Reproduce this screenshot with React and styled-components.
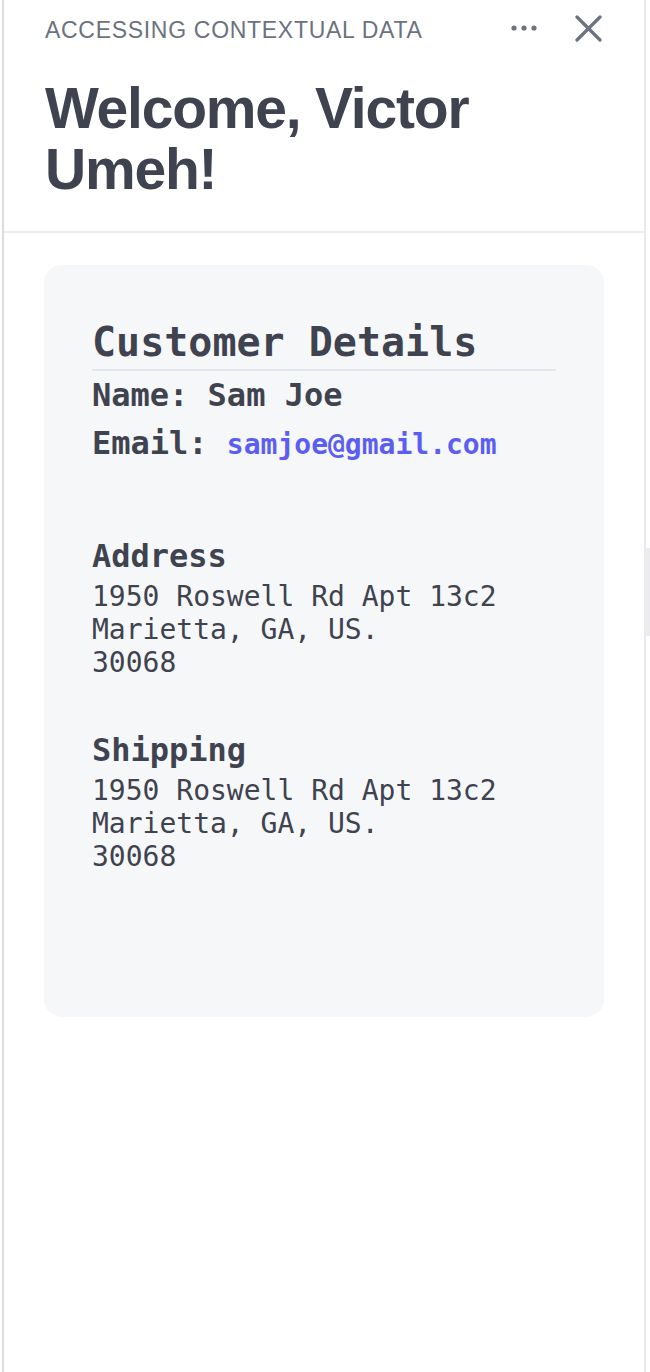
import React from 'react';
import styled, { createGlobalStyle } from 'styled-components';

const GlobalStyle = createGlobalStyle`
  html, body {
    margin: 0;
    padding: 0;
    background: #ffffff;
  }
  * {
    box-sizing: border-box;
  }
`;

const Panel = styled.div`
  margin-left: 2px;
  width: 644px;
  min-height: 100vh;
  border-left: 2px solid #dcdcdc;
  border-right: 2px solid #e9e9ee;
  background: #ffffff;
`;

const Header = styled.header`
  padding: 16px 42px 31px 41px;
  border-bottom: 2px solid #ececf2;
`;

const TopBar = styled.div`
  display: flex;
  align-items: center;
  justify-content: space-between;
  height: 28px;
`;

const Label = styled.span`
  font-family: 'Liberation Sans', Arial, sans-serif;
  font-size: 23px;
  line-height: 28px;
  letter-spacing: 0.7px;
  color: #6b7280;
  text-transform: uppercase;
`;

const Actions = styled.div`
  display: flex;
  align-items: center;
  gap: 38px;
  margin-top: -4px;
`;

const IconButton = styled.button`
  display: flex;
  align-items: center;
  justify-content: center;
  padding: 0;
  border: none;
  background: none;
  color: #6b7280;
  cursor: pointer;
`;

const Title = styled.h1`
  margin: 34px 0 0;
  font-family: 'Liberation Sans', Arial, sans-serif;
  font-size: 57px;
  font-weight: 700;
  line-height: 61px;
  letter-spacing: -1.2px;
  color: #3f434f;
`;

const Main = styled.main`
  padding: 32px 40px;
`;

const Card = styled.section`
  background: #f6f7f9;
  border-radius: 18px;
  padding: 54px 48px 144px 48px;
  font-family: 'DejaVu Sans Mono', 'Liberation Mono', monospace;
  color: #3f434f;
`;

const CardTitle = styled.h2`
  margin: 0;
  padding-bottom: 4px;
  font-size: 40px;
  font-weight: 700;
  line-height: normal;
  border-bottom: 2px solid #e2e7ed;
`;

const Field = styled.p`
  margin: 0;
  font-size: 32px;
  font-weight: 700;
  line-height: 48px;
  white-space: nowrap;
`;

const Mail = styled.a`
  font-size: 28px;
  color: #5b5ef2;
  text-decoration: none;
`;

const Block = styled.div`
  margin-top: ${(p) => p.$gap}px;
`;

const BlockTitle = styled.h3`
  margin: 0 0 5px;
  font-size: 32px;
  font-weight: 700;
  line-height: normal;
`;

const Lines = styled.div`
  font-size: 28px;
  line-height: normal;
  white-space: pre;
`;

const Handle = styled.div`
  position: fixed;
  right: 0;
  top: 548px;
  width: 5px;
  height: 88px;
  background: #ebebf0;
`;

const DotsIcon = () => (
  <svg width="26" height="6" viewBox="0 0 26 6" fill="currentColor">
    <circle cx="3" cy="3" r="2.6" />
    <circle cx="13" cy="3" r="2.6" />
    <circle cx="23" cy="3" r="2.6" />
  </svg>
);

const CloseIcon = () => (
  <svg width="27" height="27" viewBox="0 0 27 27" fill="none" stroke="currentColor" strokeWidth="3.2" strokeLinecap="round">
    <path d="M2 2 L25 25" />
    <path d="M25 2 L2 25" />
  </svg>
);

const address = `1950 Roswell Rd Apt 13c2
Marietta, GA, US.
30068`;

const App = () => {
  return (
    <>
      <GlobalStyle />
      <Panel>
        <Header>
          <TopBar>
            <Label>Accessing contextual data</Label>
            <Actions>
              <IconButton aria-label="More">
                <DotsIcon />
              </IconButton>
              <IconButton aria-label="Close">
                <CloseIcon />
              </IconButton>
            </Actions>
          </TopBar>
          <Title>
            Welcome, Victor
            <br />
            Umeh!
          </Title>
        </Header>
        <Main>
          <Card>
            <CardTitle>Customer Details</CardTitle>
            <Field>Name: Sam Joe</Field>
            <Field>
              Email: <Mail href="mailto:samjoe@gmail.com">samjoe@gmail.com</Mail>
            </Field>
            <Block $gap={68}>
              <BlockTitle>Address</BlockTitle>
              <Lines>{address}</Lines>
            </Block>
            <Block $gap={52}>
              <BlockTitle>Shipping</BlockTitle>
              <Lines>{address}</Lines>
            </Block>
          </Card>
        </Main>
      </Panel>
      <Handle />
    </>
  );
};

export default App;
